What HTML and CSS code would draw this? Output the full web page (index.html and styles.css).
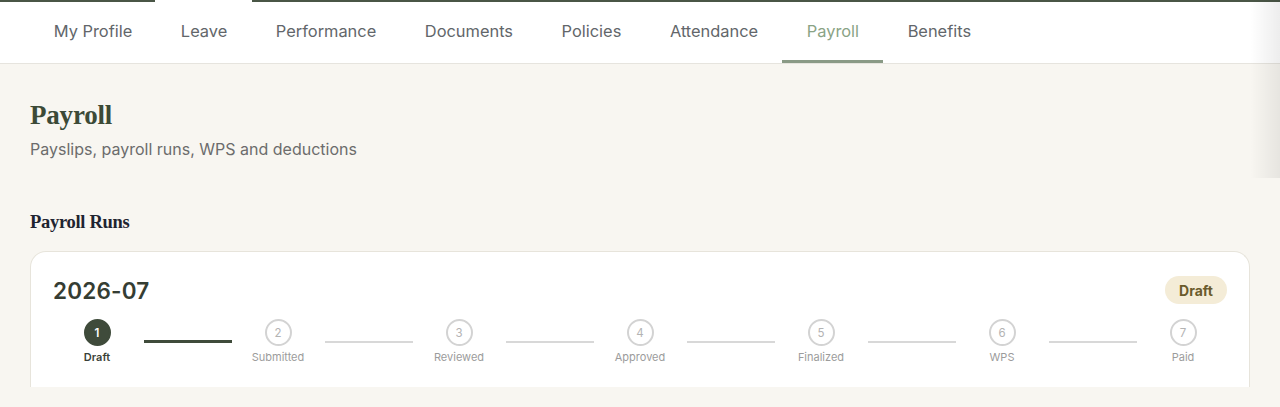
FILE: index.html
```html
<!DOCTYPE html>
<html lang="en">
<head>
<meta charset="utf-8">
<title>Payroll</title>
<link rel="stylesheet" href="styles.css">
</head>
<body>
<div class="topline"></div>
<nav class="tabs">
  <a class="tab">My Profile</a>
  <a class="tab">Leave</a>
  <a class="tab">Performance</a>
  <a class="tab">Documents</a>
  <a class="tab">Policies</a>
  <a class="tab">Attendance</a>
  <a class="tab active">Payroll</a>
  <a class="tab">Benefits</a>
</nav>
<header class="page-head">
  <h1 class="page-title">Payroll</h1>
  <p class="page-sub">Payslips, payroll runs, WPS and deductions</p>
</header>
<div class="fade"></div>
<section class="runs">
  <h2 class="section-title">Payroll Runs</h2>
  <div class="card">
    <div class="card-head">
      <span class="run-id">2026-07</span>
      <span class="badge">Draft</span>
    </div>
    <div class="stepper">
      <div class="step done"><span class="dot">1</span><span class="label">Draft</span></div>
      <div class="line done"></div>
      <div class="step"><span class="dot">2</span><span class="label">Submitted</span></div>
      <div class="line"></div>
      <div class="step"><span class="dot">3</span><span class="label">Reviewed</span></div>
      <div class="line"></div>
      <div class="step"><span class="dot">4</span><span class="label">Approved</span></div>
      <div class="line"></div>
      <div class="step"><span class="dot">5</span><span class="label">Finalized</span></div>
      <div class="line"></div>
      <div class="step"><span class="dot">6</span><span class="label">WPS</span></div>
      <div class="line"></div>
      <div class="step"><span class="dot">7</span><span class="label">Paid</span></div>
    </div>
  </div>
</section>
</body>
</html>
```
FILE: styles.css
```css
* { box-sizing: border-box; }
html, body { margin: 0; padding: 0; }
body {
  background: #f8f6f1;
  font-family: Inter, "Noto Sans", sans-serif;
  color: #333;
  position: relative;
  height: 407px;
  overflow: hidden;
}
.topline {
  height: 2px;
  background: linear-gradient(to right, #4a5646 0, #4a5646 155px, #ffffff 155px, #ffffff 252px, #4a5646 252px);
}
.tabs {
  display: flex;
  background: #ffffff;
  height: 62px;
  border-bottom: 1px solid #e6e4de;
  padding-left: 29.5px;
}
.tab {
  display: flex;
  align-items: center;
  padding: 0 24.3px;
  font-size: 16.4px;
  color: #62666a;
  border-bottom: 3px solid transparent;
}
.tab.active {
  color: #8aa385;
  border-bottom-color: #8a9a86;
}
.page-head {
  padding: 35px 30px 17px;
}
.page-title {
  margin: 0 0 6px;
  font-family: "Liberation Serif", "DejaVu Serif", serif;
  font-weight: 700;
  font-size: 27px;
  line-height: 32px;
  color: #3c4a37;
  letter-spacing: -0.2px;
}
.page-sub {
  margin: 0;
  font-size: 16px;
  line-height: 24px;
  color: #6c6c6c;
}
.fade {
  position: absolute;
  top: 0;
  right: 0;
  width: 30px;
  height: 178px;
  background: linear-gradient(to right, rgba(0,0,0,0), rgba(0,0,0,0.07));
  pointer-events: none;
}
.runs {
  padding: 32px 30px 0;
}
.section-title {
  margin: 0 0 17px;
  font-family: "Liberation Serif", "DejaVu Serif", serif;
  font-weight: 700;
  font-size: 18.5px;
  line-height: 24px;
  color: #1f2430;
  letter-spacing: -0.3px;
}
.card {
  background: #ffffff;
  border: 1px solid #e7e4db;
  border-bottom: none;
  border-radius: 16px 16px 0 0;
  padding: 24px 22px 23px;
  width: 1220px;
}
.card-head {
  display: flex;
  justify-content: space-between;
  align-items: center;
  height: 28px;
}
.run-id {
  font-size: 22.5px;
  font-weight: 600;
  color: #353d33;
  letter-spacing: 0.2px;
}
.badge {
  display: inline-flex;
  align-items: center;
  height: 28px;
  padding: 0 14px;
  border-radius: 14px;
  background: #f4ecd7;
  color: #6a5b2c;
  font-size: 14px;
  font-weight: 700;
}
.stepper {
  display: flex;
  align-items: center;
  margin-top: 15px;
  padding: 0 14px;
}
.step {
  width: 60px;
  flex: none;
  display: flex;
  flex-direction: column;
  align-items: center;
  gap: 4px;
}
.dot {
  width: 27px;
  height: 27px;
  border-radius: 50%;
  border: 2px solid #d3d3d3;
  color: #b3b3b3;
  font-size: 11.5px;
  display: flex;
  align-items: center;
  justify-content: center;
  background: #fff;
}
.step.done .dot {
  background: #3f4b3b;
  border-color: #3f4b3b;
  color: #ffffff;
  font-weight: 600;
}
.label {
  font-size: 11px;
  line-height: 14px;
  color: #9c9c9c;
}
.step.done .label {
  color: #3a3f38;
  font-weight: 600;
}
.line {
  flex: 1;
  height: 2px;
  margin: 0 16.5px;
  background: #d8d8d8;
}
.line.done {
  height: 3px;
  background: #3f4b3b;
}
```
